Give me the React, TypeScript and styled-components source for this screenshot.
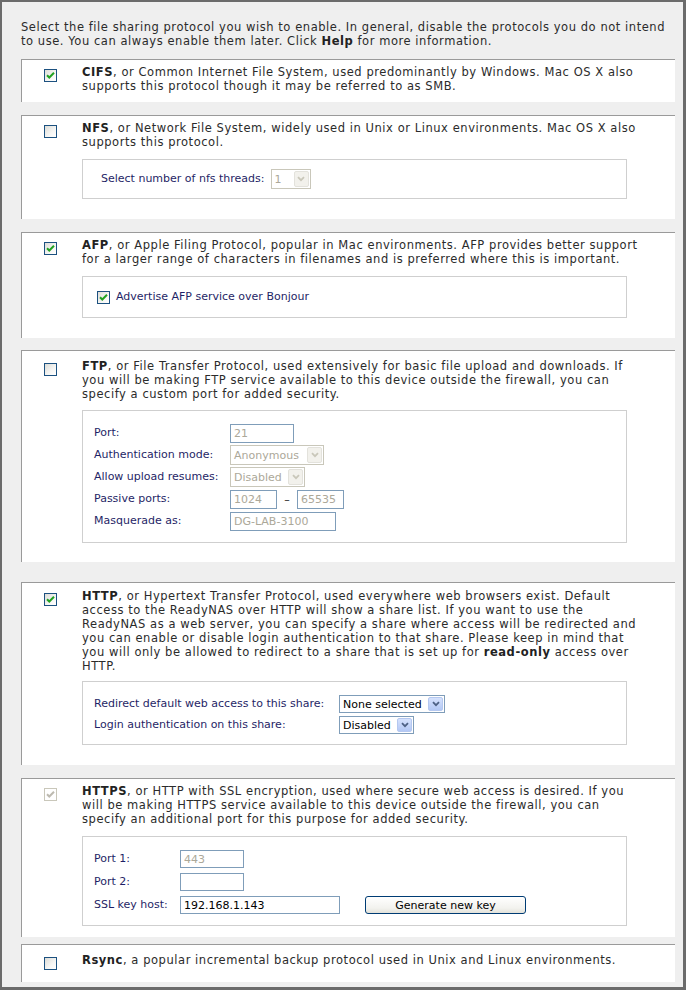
import React from "react";
import styled, { createGlobalStyle } from "styled-components";

const Global = createGlobalStyle`
  html, body { margin: 0; padding: 0; background: #6b6b6b; }
  body { font-family: "DejaVu Sans", Verdana, sans-serif; font-size: 11px; color: #2b2b2b; }
`;

const Frame = styled.div`
  box-sizing: border-box;
  height: 990px;
  overflow: hidden;
  background: #efefef;
  border-style: solid;
  border-color: #6b6b6b;
  border-width: 2px 3px 3px 2px;
  padding: 18px 8px 0 19px;
`;

/* Running copy is set a touch wider than the form labels */
const Copy = styled.p`
  margin: 0;
  font-size: 11.5px;
  letter-spacing: 0.55px;
  line-height: 14px;
  white-space: nowrap;
  b { font-weight: bold; color: #222; }
`;

const Intro = styled(Copy)`
  margin-bottom: 11px;
`;

const Card = styled.section<{ $gap: number; $pt: number; $pb: number }>`
  display: grid;
  grid-template-columns: 60px 1fr;
  align-items: start;
  background: #fff;
  border-top: 1px solid #9a9a9a;
  border-left: 1px solid #9a9a9a;
  padding: ${(p) => p.$pt}px 0 ${(p) => p.$pb}px 0;
  margin-bottom: ${(p) => p.$gap}px;
`;

const Body = styled.div`
  display: flex;
  flex-direction: column;
`;

const Box = styled.div<{ $pad: string; $mt?: number }>`
  box-sizing: border-box;
  width: 545px;
  margin-top: ${(p) => p.$mt ?? 10}px;
  border: 1px solid #cfcfcf;
  padding: ${(p) => p.$pad};
`;

const Form = styled.div<{ $label: number; $row: number; $gap: number }>`
  display: grid;
  grid-template-columns: ${(p) => p.$label}px auto;
  grid-auto-rows: ${(p) => p.$row}px;
  row-gap: ${(p) => p.$gap}px;
  align-items: center;
  justify-items: start;
`;

const Label = styled.span`
  color: #1f1f66;
  line-height: 14px;
`;

const InlineRow = styled.div<{ $gap?: number }>`
  display: flex;
  align-items: center;
  gap: ${(p) => p.$gap ?? 6}px;
`;

const Tick = styled.span<{ $off?: boolean }>`
  box-sizing: border-box;
  display: inline-flex;
  align-items: center;
  justify-content: center;
  width: 13px;
  height: 13px;
  border: 1px solid ${(p) => (p.$off ? "#c9c7ba" : "#1c5180")};
  background: ${(p) =>
    p.$off ? "#fff" : "linear-gradient(135deg, #dcdcd7 0%, #f6f6f4 60%, #ffffff 100%)"};
  flex: none;
`;

const CheckCol = styled.div`
  padding: 4px 0 0 22px;
  display: flex;
`;

const Check = ({ on, off }: { on?: boolean; off?: boolean }) => (
  <Tick $off={off}>
    {on && (
      <svg width="9" height="9" viewBox="0 0 9 9">
        <path
          d="M1 4.2 L3.3 6.5 L8 1.8"
          fill="none"
          stroke={off ? "#bdbab0" : "#21a121"}
          strokeWidth="2"
        />
      </svg>
    )}
  </Tick>
);

const Field = styled.input<{ $w: number; $h?: number }>`
  box-sizing: border-box;
  width: ${(p) => p.$w}px;
  height: ${(p) => p.$h ?? 19}px;
  margin: 0;
  padding: 0 3px;
  border: 1px solid #7f9db9;
  background: #fff;
  font: 11px "DejaVu Sans", Verdana, sans-serif;
  color: #000;
  outline: none;
  &:disabled { color: #aca899; background: #fff; }
`;

const SelectShell = styled.div<{ $w: number; $h: number; $off?: boolean }>`
  box-sizing: border-box;
  display: flex;
  align-items: center;
  width: ${(p) => p.$w}px;
  height: ${(p) => p.$h}px;
  border: 1px solid ${(p) => (p.$off ? "#c9c7ba" : "#7f9db9")};
  background: #fff;
  padding: 1px;
`;

const SelectText = styled.span<{ $off?: boolean }>`
  flex: 1;
  padding-left: 2px;
  color: ${(p) => (p.$off ? "#aca899" : "#000")};
  white-space: nowrap;
  overflow: hidden;
`;

const SelectArrow = styled.span<{ $off?: boolean }>`
  box-sizing: border-box;
  display: flex;
  align-items: center;
  justify-content: center;
  width: 15px;
  height: 100%;
  border: 1px solid ${(p) => (p.$off ? "#e3e2dc" : "#b5c8f0")};
  border-radius: 2px;
  background: ${(p) =>
    p.$off ? "#f2f1ec" : "linear-gradient(#d6e2fd, #b3c8f5)"};
`;

const Select = ({ value, w, h, off }: { value: string; w: number; h: number; off?: boolean }) => (
  <SelectShell $w={w} $h={h} $off={off}>
    <SelectText $off={off}>{value}</SelectText>
    <SelectArrow $off={off}>
      <svg width="8" height="6" viewBox="0 0 8 6">
        <path d="M1 1.2 L4 4.2 L7 1.2" fill="none" stroke={off ? "#c9c7ba" : "#4d6185"} strokeWidth="1.8" />
      </svg>
    </SelectArrow>
  </SelectShell>
);

const Dash = styled.span`
  color: #222;
  width: 14px;
  text-align: center;
`;

const Button = styled.button`
  box-sizing: border-box;
  width: 161px;
  height: 18px;
  margin-left: 25px;
  padding: 0;
  border: 1px solid #003c74;
  border-radius: 3px;
  background: linear-gradient(#ffffff, #f2f2ee 70%, #e3e2da);
  font: 11px "DejaVu Sans", Verdana, sans-serif;
  color: #000;
`;

export default function App() {
  return (
    <>
      <Global />
      <Frame>
        <Intro>
          Select the file sharing protocol you wish to enable. In general, disable the protocols you do not intend
          <br />
          to use. You can always enable them later. Click <b>Help</b> for more information.
        </Intro>

        <Card $gap={13} $pt={5} $pb={9}>
          <CheckCol><Check on /></CheckCol>
          <Body>
            <Copy>
              <b>CIFS</b>, or Common Internet File System, used predominantly by Windows. Mac OS X also
              <br />
              supports this protocol though it may be referred to as SMB.
            </Copy>
          </Body>
        </Card>

        <Card $gap={13} $pt={5} $pb={20}>
          <CheckCol><Check /></CheckCol>
          <Body>
            <Copy>
              <b>NFS</b>, or Network File System, widely used in Unix or Linux environments. Mac OS X also
              <br />
              supports this protocol.
            </Copy>
            <Box $pad="9px 18px">
              <InlineRow>
                <Label>Select number of nfs threads:</Label>
                <Select value="1" w={40} h={20} off />
              </InlineRow>
            </Box>
          </Body>
        </Card>

        <Card $gap={12} $pt={5} $pb={20}>
          <CheckCol><Check on /></CheckCol>
          <Body>
            <Copy>
              <b>AFP</b>, or Apple Filing Protocol, popular in Mac environments. AFP provides better support
              <br />
              for a larger range of characters in filenames and is preferred where this is important.
            </Copy>
            <Box $pad="13px 14px">
              <InlineRow>
                <Check on />
                <Label>Advertise AFP service over Bonjour</Label>
              </InlineRow>
            </Box>
          </Body>
        </Card>

        <Card $gap={20} $pt={8} $pb={19}>
          <CheckCol><Check /></CheckCol>
          <Body>
            <Copy>
              <b>FTP</b>, or File Transfer Protocol, used extensively for basic file upload and downloads. If
              <br />
              you will be making FTP service available to this device outside the firewall, you can
              <br />
              specify a custom port for added security.
            </Copy>
            <Box $pad="12px 11px 11px" $mt={9}>
              <Form $label={136} $row={20} $gap={2}>
                <Label>Port:</Label>
                <Field $w={64} defaultValue="21" disabled />
                <Label>Authentication mode:</Label>
                <Select value="Anonymous" w={94} h={20} off />
                <Label>Allow upload resumes:</Label>
                <Select value="Disabled" w={75} h={20} off />
                <Label>Passive ports:</Label>
                <InlineRow $gap={3}>
                  <Field $w={47} defaultValue="1024" disabled />
                  <Dash>–</Dash>
                  <Field $w={47} defaultValue="65535" disabled />
                </InlineRow>
                <Label>Masquerade as:</Label>
                <Field $w={106} defaultValue="DG-LAB-3100" disabled />
              </Form>
            </Box>
          </Body>
        </Card>

        <Card $gap={13} $pt={6} $pb={20}>
          <CheckCol><Check on /></CheckCol>
          <Body>
            <Copy>
              <b>HTTP</b>, or Hypertext Transfer Protocol, used everywhere web browsers exist. Default
              <br />
              access to the ReadyNAS over HTTP will show a share list. If you want to use the
              <br />
              ReadyNAS as a web server, you can specify a share where access will be redirected and
              <br />
              you can enable or disable login authentication to that share. Please keep in mind that
              <br />
              you will only be allowed to redirect to a share that is set up for <b>read-only</b> access over
              <br />
              HTTP.
            </Copy>
            <Box $pad="13px 11px 10px" $mt={8}>
              <Form $label={245} $row={18} $gap={3}>
                <Label>Redirect default web access to this share:</Label>
                <Select value="None selected" w={106} h={18} />
                <Label>Login authentication on this share:</Label>
                <Select value="Disabled" w={75} h={18} />
              </Form>
            </Box>
          </Body>
        </Card>

        <Card $gap={7} $pt={5} $pb={11}>
          <CheckCol><Check on off /></CheckCol>
          <Body>
            <Copy>
              <b>HTTPS</b>, or HTTP with SSL encryption, used where secure web access is desired. If you
              <br />
              will be making HTTPS service available to this device outside the firewall, you can
              <br />
              specify an additional port for this purpose for added security.
            </Copy>
            <Box $pad="13px 11px 11px">
              <Form $label={86} $row={18} $gap={5}>
                <Label>Port 1:</Label>
                <Field $w={64} $h={18} defaultValue="443" disabled />
                <Label>Port 2:</Label>
                <Field $w={64} $h={18} defaultValue="" />
                <Label>SSL key host:</Label>
                <InlineRow $gap={0}>
                  <Field $w={160} $h={18} defaultValue="192.168.1.143" />
                  <Button type="button">Generate new key</Button>
                </InlineRow>
              </Form>
            </Box>
          </Body>
        </Card>

        <Card $gap={0} $pt={8} $pb={12}>
          <CheckCol><Check /></CheckCol>
          <Body>
            <Copy>
              <b>Rsync</b>, a popular incremental backup protocol used in Unix and Linux environments.
            </Copy>
          </Body>
        </Card>
      </Frame>
    </>
  );
}
